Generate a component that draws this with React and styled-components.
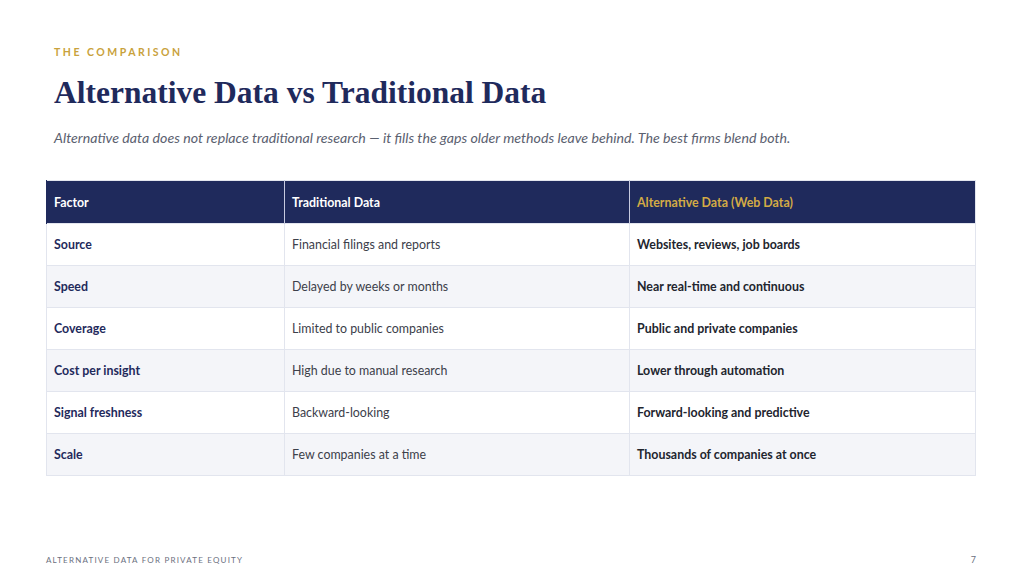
import React from 'react';
import styled, { createGlobalStyle } from 'styled-components';

const GlobalStyle = createGlobalStyle`
  html, body {
    margin: 0;
    padding: 0;
    background: #ffffff;
  }
  body {
    font-family: Lato, 'Open Sans', sans-serif;
  }
`;

const Slide = styled.div`
  width: 1024px;
  height: 576px;
  box-sizing: border-box;
  padding: 45px 49px 0 46px;
  display: flex;
  flex-direction: column;
`;

const Header = styled.header`
  padding-left: 8px;
`;

const Eyebrow = styled.div`
  font-size: 10.5px;
  font-weight: 700;
  letter-spacing: 2.5px;
  color: #c9a23c;
  line-height: 14px;
`;

const Title = styled.h1`
  margin: 15px 0 0;
  font-family: 'Liberation Serif', 'DejaVu Serif', serif;
  font-weight: 700;
  font-size: 31.5px;
  line-height: 38px;
  color: #1f2a5c;
`;

const Subtitle = styled.p`
  margin: 16px 0 0;
  font-style: italic;
  font-size: 14.2px;
  line-height: 20px;
  color: #5b6170;
`;

const Table = styled.table`
  margin-top: 32px;
  width: 929px;
  border-collapse: collapse;
  table-layout: fixed;
  border: 1px solid #e2e5ee;
`;

const HeadCell = styled.th`
  background: #1f2a5c;
  color: ${(p) => (p.$accent ? '#d4ab45' : '#ffffff')};
  font-weight: 700;
  font-size: 12.4px;
  text-align: left;
  height: 42px;
  padding: 0 7px;
  border-left: 1px solid ${(p) => (p.$first ? '#1f2a5c' : '#c7cbe0')};
`;

const Row = styled.tr`
  background: ${(p) => (p.$shade ? '#f4f5f9' : '#ffffff')};
`;

const Cell = styled.td`
  height: 41px;
  padding: 0 7px;
  font-size: 12.4px;
  border-top: 1px solid #e2e5ee;
  border-left: 1px solid #e2e5ee;
  color: ${(p) => (p.$kind === 'factor' ? '#1f2a5c' : p.$kind === 'alt' ? '#22252e' : '#3c404a')};
  font-weight: ${(p) => (p.$kind === 'trad' ? 400 : 700)};
`;

const Footer = styled.footer`
  margin-top: auto;
  height: 21px;
  display: flex;
  justify-content: space-between;
  align-items: flex-start;
  font-size: 8px;
  line-height: 10px;
  letter-spacing: 1.2px;
  color: #6b7080;
`;

const PageNum = styled.span`
  letter-spacing: 0;
  font-size: 9px;
  margin-right: -1px;
`;

const rows = [
  ['Source', 'Financial filings and reports', 'Websites, reviews, job boards'],
  ['Speed', 'Delayed by weeks or months', 'Near real-time and continuous'],
  ['Coverage', 'Limited to public companies', 'Public and private companies'],
  ['Cost per insight', 'High due to manual research', 'Lower through automation'],
  ['Signal freshness', 'Backward-looking', 'Forward-looking and predictive'],
  ['Scale', 'Few companies at a time', 'Thousands of companies at once'],
];

const App = () => {
  return (
    <>
      <GlobalStyle />
      <Slide>
        <Header>
          <Eyebrow>THE COMPARISON</Eyebrow>
          <Title>Alternative Data vs Traditional Data</Title>
          <Subtitle>
            Alternative data does not replace traditional research — it fills the gaps older
            methods leave behind. The best firms blend both.
          </Subtitle>
        </Header>

        <Table>
          <colgroup>
            <col style={{ width: '238px' }} />
            <col style={{ width: '345px' }} />
            <col style={{ width: '346px' }} />
          </colgroup>
          <thead>
            <tr>
              <HeadCell $first>Factor</HeadCell>
              <HeadCell>Traditional Data</HeadCell>
              <HeadCell $accent>Alternative Data (Web Data)</HeadCell>
            </tr>
          </thead>
          <tbody>
            {rows.map((r, i) => (
              <Row key={r[0]} $shade={i % 2 === 1}>
                <Cell $kind="factor">{r[0]}</Cell>
                <Cell $kind="trad">{r[1]}</Cell>
                <Cell $kind="alt">{r[2]}</Cell>
              </Row>
            ))}
          </tbody>
        </Table>

        <Footer>
          <span>ALTERNATIVE DATA FOR PRIVATE EQUITY</span>
          <PageNum>7</PageNum>
        </Footer>
      </Slide>
    </>
  );
};

export default App;
